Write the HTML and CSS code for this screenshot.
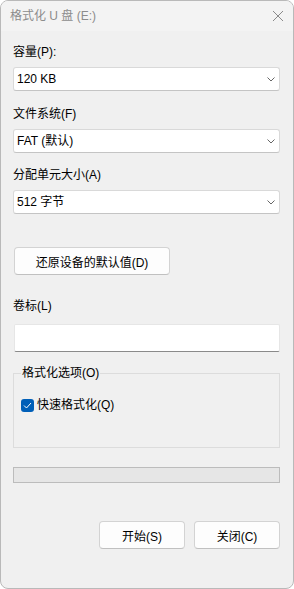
FILE: index.html
```html
<!DOCTYPE html>
<html lang="zh-CN">
<head>
    <meta charset="UTF-8">
    <meta name="viewport" content="width=device-width, initial-scale=1.0">
    <title>格式化 U 盘 (E:)</title>
    <link rel="stylesheet" href="styles.css">
</head>
<body>
    <div class="window">
        <div class="titlebar">
            <span class="title">格式化 U 盘 (E:)</span>
            <svg class="close" width="12" height="12" viewBox="0 0 12 12">
                <path d="M1 1 L11 11 M11 1 L1 11" stroke="#8a8a8a" stroke-width="1" fill="none"/>
            </svg>
        </div>

        <div class="content">
            <div class="label first">容量(P):</div>
            <div class="combo">
                <span>120 KB</span>
                <svg class="chevron" width="8" height="5" viewBox="0 0 8 5"><path d="M0.5 0.5 L4 4 L7.5 0.5" stroke="#666" fill="none"/></svg>
            </div>

            <div class="label">文件系统(F)</div>
            <div class="combo">
                <span>FAT (默认)</span>
                <svg class="chevron" width="8" height="5" viewBox="0 0 8 5"><path d="M0.5 0.5 L4 4 L7.5 0.5" stroke="#666" fill="none"/></svg>
            </div>

            <div class="label unit">分配单元大小(A)</div>
            <div class="combo">
                <span>512 字节</span>
                <svg class="chevron" width="8" height="5" viewBox="0 0 8 5"><path d="M0.5 0.5 L4 4 L7.5 0.5" stroke="#666" fill="none"/></svg>
            </div>

            <button class="btn restore">还原设备的默认值(D)</button>

            <div class="label volume">卷标(L)</div>
            <div class="textbox"></div>

            <fieldset class="group">
                <legend>格式化选项(O)</legend>
                <label class="check">
                    <span class="box">
                        <svg width="9" height="7" viewBox="0 0 9 7"><path d="M1 3.5 L3.5 6 L8 1" stroke="#fff" stroke-width="1" fill="none"/></svg>
                    </span>
                    快速格式化(Q)
                </label>
            </fieldset>

            <div class="progress"></div>

            <div class="actions">
                <button class="btn">开始(S)</button>
                <button class="btn">关闭(C)</button>
            </div>
        </div>
    </div>
</body>
</html>
```

FILE: styles.css
```css
html, body { margin: 0; padding: 0; background: #fff; }
body { font-family: "Liberation Sans", "Noto Sans CJK SC", sans-serif; font-size: 12px; color: #000; }

.window { width: 294px; height: 589px; box-sizing: border-box; border: 1px solid #b9b9b9; border-radius: 8px; background: #f0f0f0; overflow: hidden; }

.titlebar { height: 30px; background: #f3f3f3; display: flex; align-items: center; justify-content: space-between; padding: 0 9px 0 9px; }
.title { color: #8c8c8c; line-height: 16px; }
.close { margin-top: -1px; }

.content { padding: 13px 13px 0 12px; }

.label { line-height: 16px; margin-top: 15px; }
.label.first { margin-top: 0; }
.label.unit { margin-top: 14px; }
.label.volume { margin-top: 23px; }

.combo { height: 24px; box-sizing: border-box; margin-top: 7px; background: #fff; border: 1px solid #d9d9d9; border-bottom-color: #c4c4c4; border-radius: 3px; display: flex; align-items: center; justify-content: space-between; padding: 0 4px 0 3px; }
.combo span { line-height: 16px; }

.btn { font: inherit; color: #000; background: #fdfdfd; border: 1px solid #d3d3d3; border-bottom-color: #c0c0c0; border-radius: 4px; height: 28px; padding: 0; }
.restore { display: block; margin: 33px 0 0 1px; width: 156px; height: 28px; }

.textbox { height: 28px; box-sizing: border-box; margin: 10px 0 0 1px; background: #fff; border: 1px solid #e6e6e6; border-bottom: 1px solid #8a8a8a; border-radius: 2px; }

.group { margin: 13px 0 0 0; padding: 0 7px 0 8px; height: 83px; box-sizing: border-box; border: 1px solid #dcdcdc; }
.group legend { padding: 0 1px; margin-left: -1px; line-height: 16px; }

.check { display: flex; align-items: center; gap: 3px; margin-top: 16px; line-height: 16px; margin-left: -1px; }
.box { width: 13px; height: 13px; border-radius: 3px; background: #005fb8; display: flex; align-items: center; justify-content: center; }

.progress { height: 16px; box-sizing: border-box; margin-top: 19px; background: #e6e6e6; border: 1px solid #bcbcbc; }

.actions { display: flex; justify-content: flex-end; gap: 9px; margin-top: 38px; }
.actions .btn { width: 86px; }
```
